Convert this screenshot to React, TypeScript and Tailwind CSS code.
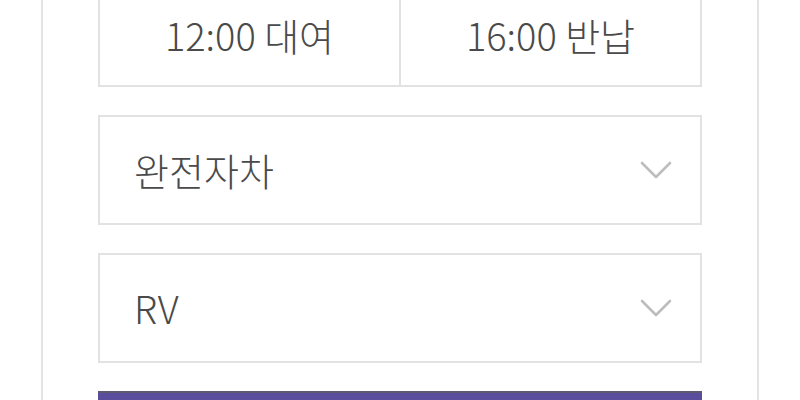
function Chevron() {
  return (
    <svg width="32" height="18" viewBox="0 0 32 18" fill="none" className="text-[#bdbdbd]">
      <path d="M2 2 16 16 30 2" stroke="currentColor" strokeWidth="2.6" strokeLinecap="round" strokeLinejoin="round" />
    </svg>
  );
}

function SelectBox({ label }: { label: string }) {
  return (
    <div className="flex h-[110px] items-center justify-between border-2 border-[#e2e2e2] bg-white pl-[34px] pr-[28px]">
      <span className="text-[38px] font-light leading-none text-[#4a4a4a]">{label}</span>
      <Chevron />
    </div>
  );
}

export default function App() {
  return (
    <div
      className="h-[400px] w-[800px] overflow-hidden bg-white"
      style={{ fontFamily: '"Noto Sans CJK KR", "Noto Sans", sans-serif' }}
    >
      <div className="mx-[41px] -mt-[23px] h-[440px] border-x-2 border-[#e4e4e4] px-[55px]">
        <div className="flex h-[110px] border-2 border-[#e2e2e2]">
          <div className="flex flex-1 items-center justify-center border-r-2 border-[#e2e2e2] pt-[4px] text-[38px] font-light text-[#4a4a4a]">
            12:00 대여
          </div>
          <div className="flex flex-1 items-center justify-center pt-[4px] text-[38px] font-light text-[#4a4a4a]">
            16:00 반납
          </div>
        </div>

        <div className="mt-[28px] flex flex-col gap-[28px]">
          <SelectBox label="완전자차" />
          <SelectBox label="RV" />
          <div className="h-[60px] border-t-2 border-[#5c5a70] bg-[#5a4d9e]" />
        </div>
      </div>
    </div>
  );
}
